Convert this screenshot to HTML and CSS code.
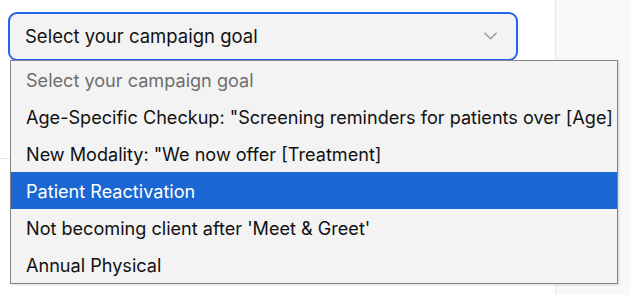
FILE: index.html
```html
<!DOCTYPE html>
<html lang="en">
<head>
    <meta charset="UTF-8">
    <meta name="viewport" content="width=device-width, initial-scale=1.0">
    <title>Campaign Goal</title>
    <link rel="stylesheet" href="styles.css">
</head>
<body>
    <div class="layout">
        <main class="main">
            <div class="goal-select">
                <div class="select-box">
                    <span class="select-value">Select your campaign goal</span>
                    <svg class="chevron" viewBox="0 0 16 10">
                        <path d="M1.5 1.5l6.5 6.5 6.5-6.5"/>
                    </svg>
                </div>
                <ul class="options">
                    <li class="option placeholder">Select your campaign goal</li>
                    <li class="option">Age-Specific Checkup: "Screening reminders for patients over [Age]</li>
                    <li class="option">New Modality: "We now offer [Treatment]</li>
                    <li class="option selected">Patient Reactivation</li>
                    <li class="option">Not becoming client after 'Meet &amp; Greet'</li>
                    <li class="option">Annual Physical</li>
                </ul>
            </div>
            <div class="divider"></div>
        </main>
        <aside class="side"></aside>
    </div>
</body>
</html>
```

FILE: styles.css
```css
* {
    margin: 0;
    padding: 0;
    box-sizing: border-box;
}

body {
    font-family: Inter, "Noto Sans", Arial, sans-serif;
    background: #fff;
    color: #111;
}

.layout {
    display: flex;
    min-height: 100vh;
}

.main {
    width: 555px;
    padding: 12px 0 0 8px;
}

.side {
    flex: 1;
    background: #f8f8f8;
    border-left: 1px solid #e6e6e6;
}

.goal-select {
    position: relative;
    width: 510px;
}

.select-box {
    height: 49px;
    display: flex;
    align-items: center;
    justify-content: space-between;
    padding: 0 18px 2px 15px;
    background: #f3f3f3;
    border: 2px solid #2563eb;
    border-radius: 9px;
    font-size: 18.5px;
}

.chevron {
    width: 15px;
    height: 10px;
    fill: none;
    stroke: #9a9a9a;
    stroke-width: 1.6;
}

.divider {
    margin: 97px 0 0 -8px;
    height: 1px;
    background: #e6e6e6;
}

.options {
    position: absolute;
    top: 48px;
    left: 2px;
    width: 608px;
    list-style: none;
    background: #f3f3f3;
    border: 1px solid #858585;
    box-shadow: 1px 1px 2px rgba(0, 0, 0, 0.15);
    z-index: 2;
}

.option {
    height: 37px;
    display: flex;
    align-items: center;
    padding-left: 15px;
    font-size: 18.1px;
    color: #111;
    white-space: nowrap;
}

.option.placeholder {
    color: #6e6e6e;
}

.option.selected {
    background: #1a66d2;
    color: #fff;
}
```
